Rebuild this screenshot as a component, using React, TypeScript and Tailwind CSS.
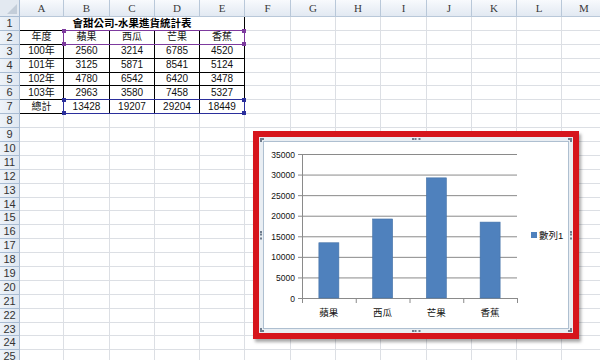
import React from 'react';

const COLS = ['A', 'B', 'C', 'D', 'E', 'F', 'G', 'H', 'I', 'J', 'K', 'L', 'M'];
const WIDTHS = [
  'w-[44px]', 'w-[46px]', 'w-[45px]', 'w-[45px]', 'w-[45px]', 'w-[46px]', 'w-[45px]',
  'w-[45px]', 'w-[46px]', 'w-[45px]', 'w-[45px]', 'w-[45px]', 'w-[45px]',
];

const TABLE = [
  ['年度', '蘋果', '西瓜', '芒果', '香蕉'],
  ['100年', '2560', '3214', '6785', '4520'],
  ['101年', '3125', '5871', '8541', '5124'],
  ['102年', '4780', '6542', '6420', '3478'],
  ['103年', '2963', '3580', '7458', '5327'],
  ['總計', '13428', '19207', '29204', '18449'],
];

const SERIES = [
  { name: '蘋果', value: 13428 },
  { name: '西瓜', value: 19207 },
  { name: '芒果', value: 29204 },
  { name: '香蕉', value: 18449 },
];

const SANS = { fontFamily: '"Liberation Sans", "Noto Sans CJK TC", sans-serif' };
const SERIF = { fontFamily: '"Liberation Serif", "Noto Sans CJK TC", serif' };

const Handles = ({ color }: { color: string }) => (
  <>
    <span className={`absolute -left-[2px] -top-[2px] w-[4px] h-[4px] ${color}`} />
    <span className={`absolute -right-[2px] -top-[2px] w-[4px] h-[4px] ${color}`} />
    <span className={`absolute -left-[2px] -bottom-[2px] w-[4px] h-[4px] ${color}`} />
    <span className={`absolute -right-[2px] -bottom-[2px] w-[4px] h-[4px] ${color}`} />
  </>
);

const RowHead = ({ n }: { n: number }) => (
  <div className="w-[20px] shrink-0 h-full flex items-center justify-center bg-gradient-to-r from-[#eef3f9] to-[#dfe7f1] border-r border-b border-[#a9bcd3] text-[11px] text-[#333]">
    {n}
  </div>
);

const Sheet = () => {
  const rows: React.ReactNode[] = [];

  // column letters
  rows.push(
    <div key="head" className="flex h-[17px]" style={SERIF}>
      <div className="w-[20px] shrink-0 bg-[#e3e9f1] border-r border-b border-[#a9bcd3] relative">
        <span className="absolute right-[2px] bottom-[2px] w-0 h-0 border-l-[10px] border-l-transparent border-b-[10px] border-b-[#c3cdd9]" />
      </div>
      {COLS.map((c, i) => (
        <div
          key={c}
          className={`${WIDTHS[i]} shrink-0 flex items-center justify-center bg-gradient-to-b from-[#f8fafd] to-[#e2e9f2] border-r border-b border-[#b9c8d9] text-[11px] text-[#3a3a3a]`}
        >
          {c}
        </div>
      ))}
    </div>
  );

  for (let r = 1; r <= 25; r++) {
    const cells: React.ReactNode[] = [];
    if (r === 1) {
      cells.push(
        <div
          key="title"
          className="w-[225px] shrink-0 flex items-center justify-center border-r border-b border-black font-bold text-[10.5px] text-black"
        >
          會甜公司-水果進貨統計表
        </div>
      );
      COLS.slice(5).forEach((c, j) => {
        cells.push(
          <div key={c} className={`${WIDTHS[j + 5]} shrink-0 border-r border-b border-[#dcdfe4]`} />
        );
      });
    } else {
      COLS.forEach((c, i) => {
        const inTable = r >= 2 && r <= 7 && i <= 4;
        const text = inTable ? TABLE[r - 2][i] : '';
        const sel2 = r === 2 && i === 1;
        const sel7 = r === 7 && i === 1;
        cells.push(
          <div
            key={c}
            className={`${WIDTHS[i]} shrink-0 relative flex items-center justify-center text-[10px] text-[#111] ${
              inTable ? 'border-r border-b border-black' : 'border-r border-b border-[#dcdfe4]'
            }`}
          >
            {text}
            {sel2 && (
              <div className="absolute -left-[1px] -top-[1px] w-[182px] h-[15px] border border-[#7d3a9e] z-10">
                <Handles color="bg-[#7d3a9e]" />
              </div>
            )}
            {sel7 && (
              <div className="absolute -left-[1px] -top-[1px] w-[182px] h-[15px] border border-[#2b2f9c] z-10">
                <Handles color="bg-[#2b2f9c]" />
              </div>
            )}
          </div>
        );
      });
    }
    rows.push(
      <div key={r} className="flex h-[13.9px] leading-none">
        <RowHead n={r} />
        {cells}
      </div>
    );
  }

  return <div style={SANS}>{rows}</div>;
};

const Chart = () => {
  const top = 12;
  const bottom = 156;
  const left = 38;
  const right = 253;
  const step = (right - left) / 4;
  const scale = (bottom - top) / 35000;
  const ticks = [35000, 30000, 25000, 20000, 15000, 10000, 5000, 0];

  return (
    <svg width="304" height="186" className="block" style={SANS}>
      {ticks.map((t) => {
        const y = bottom - t * scale + 0.5;
        return (
          <g key={t}>
            <line x1={left - 4} x2={right} y1={y} y2={y} stroke="#8a8a8a" strokeWidth="1" />
            <text x={left - 7} y={y + 3} fontSize="8.5" textAnchor="end" fill="#111">
              {t}
            </text>
          </g>
        );
      })}
      <line x1={left + 0.5} x2={left + 0.5} y1={top} y2={bottom + 1} stroke="#8a8a8a" />
      {[0, 1, 2, 3, 4].map((k) => (
        <line
          key={k}
          x1={left + k * step + 0.5}
          x2={left + k * step + 0.5}
          y1={bottom}
          y2={bottom + 5}
          stroke="#8a8a8a"
        />
      ))}
      {SERIES.map((s, k) => {
        const h = s.value * scale;
        const cx = left + step * k + step / 2;
        return (
          <g key={s.name}>
            <rect x={cx - 10} y={bottom - h} width="20" height={h} fill="#4f81bd" stroke="#4572a7" strokeWidth="0.6" />
            <text x={cx} y={bottom + 18} fontSize="9.5" textAnchor="middle" fill="#111">
              {s.name}
            </text>
          </g>
        );
      })}
      <rect x="267" y="90" width="6" height="6" fill="#4f81bd" />
      <text x="275" y="97" fontSize="9.5" fill="#111">
        數列1
      </text>
    </svg>
  );
};

export default function App() {
  return (
    <div className="relative w-[600px] h-[360px] overflow-hidden bg-white">
      <Sheet />

      {/* chart floating over the sheet, ringed in red */}
      <div className="absolute left-[253px] top-[131px] w-[326px] h-[208px] border-[6px] border-[#d6151c] shadow-[2px_3px_3px_rgba(0,0,0,0.35)]">
        <div className="relative w-full h-full bg-[#e9eef3] p-[4px]">
          <div className="w-full h-full border border-[#aebfd0] bg-white">
            <Chart />
          </div>
          <span className="absolute left-1/2 -translate-x-1/2 top-[1px] w-[9px] border-t-2 border-dotted border-[#6f7c8c]" />
          <span className="absolute left-1/2 -translate-x-1/2 bottom-[1px] w-[9px] border-t-2 border-dotted border-[#6f7c8c]" />
          <span className="absolute top-1/2 -translate-y-1/2 left-[1px] h-[9px] border-l-2 border-dotted border-[#6f7c8c]" />
          <span className="absolute top-1/2 -translate-y-1/2 right-[1px] h-[9px] border-l-2 border-dotted border-[#6f7c8c]" />
          <span className="absolute left-[1px] top-[1px] w-[4px] h-[4px] border-l-2 border-t-2 border-dotted border-[#6f7c8c]" />
          <span className="absolute right-[1px] top-[1px] w-[4px] h-[4px] border-r-2 border-t-2 border-dotted border-[#6f7c8c]" />
          <span className="absolute left-[1px] bottom-[1px] w-[4px] h-[4px] border-l-2 border-b-2 border-dotted border-[#6f7c8c]" />
          <span className="absolute right-[1px] bottom-[1px] w-[4px] h-[4px] border-r-2 border-b-2 border-dotted border-[#6f7c8c]" />
        </div>
      </div>
    </div>
  );
}
